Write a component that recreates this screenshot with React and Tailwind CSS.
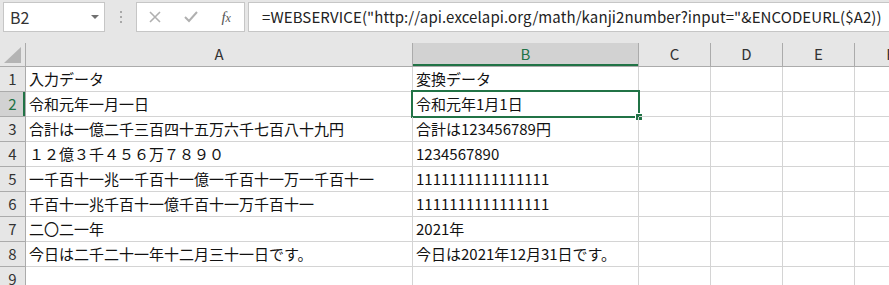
import React from "react";

const cols = [
  { k: "A", w: "w-[387px]" },
  { k: "B", w: "w-[226px]" },
  { k: "C", w: "w-[72px]" },
  { k: "D", w: "w-[72px]" },
  { k: "E", w: "w-[72px]" },
  { k: "F", w: "w-[72px]" },
];

const rows = [
  ["入力データ", "変換データ"],
  ["令和元年一月一日", "令和元年1月1日"],
  ["合計は一億二千三百四十五万六千七百八十九円", "合計は123456789円"],
  ["１２億３千４５６万７８９０", "1234567890"],
  ["一千百十一兆一千百十一億一千百十一万一千百十一", "1111111111111111"],
  ["千百十一兆千百十一億千百十一万千百十一", "1111111111111111"],
  ["二〇二一年", "2021年"],
  ["今日は二千二十一年十二月三十一日です。", "今日は2021年12月31日です。"],
  ["", ""],
];

export default function App() {
  return (
    <div className="w-[889px] h-[285px] overflow-hidden bg-[#e6e6e6] font-['Noto_Sans_CJK_JP','Noto_Sans',sans-serif] text-[15px] text-[#222]">
      {/* toolbar */}
      <div className="h-[43px] flex items-start pt-[2px]">
        <div className="ml-[3px] w-[102px] h-[30px] bg-white border border-[#c6c6c6] flex items-center justify-between pl-[6px] pr-[4px]">
          <span className="text-[16px] text-[#333] leading-none">B2</span>
          <svg width="10" height="6" viewBox="0 0 10 6">
            <path d="M1 1 L9 1 L5 5 Z" fill="#707070" />
          </svg>
        </div>
        <div className="w-[31px] h-[30px] flex flex-col items-center justify-center gap-[3px]">
          <span className="w-[2px] h-[2px] bg-[#a8a8a8]" />
          <span className="w-[2px] h-[2px] bg-[#a8a8a8]" />
          <span className="w-[2px] h-[2px] bg-[#a8a8a8]" />
        </div>
        <div className="w-[109px] h-[30px] bg-white border border-[#c6c6c6] flex items-center">
          <div className="w-[36px] flex justify-center">
            <svg width="12" height="12" viewBox="0 0 12 12">
              <path d="M1 1 L11 11 M11 1 L1 11" stroke="#b0b0b0" strokeWidth="1.6" />
            </svg>
          </div>
          <div className="w-[36px] flex justify-center">
            <svg width="14" height="12" viewBox="0 0 14 12">
              <path d="M1 6 L5 10 L13 1" stroke="#b0b0b0" strokeWidth="2" fill="none" />
            </svg>
          </div>
          <div className="w-[36px] flex justify-center">
            <span className="font-['Liberation_Serif',serif] italic text-[15px] text-[#555] leading-none">
              f<span className="text-[12px]">x</span>
            </span>
          </div>
        </div>
        <div className="ml-[3px] flex-1 h-[30px] bg-white border border-r-0 border-[#c6c6c6] flex items-center pl-[13px] whitespace-nowrap overflow-hidden">
          <span className="text-[15px] text-[#222] tracking-[0.1px]">
            =WEBSERVICE("http://api.excelapi.org/math/kanji2number?input="&amp;ENCODEURL($A2))
          </span>
        </div>
      </div>

      {/* sheet */}
      <div className="bg-white">
        {/* column header */}
        <div className="flex h-[24px] bg-[#e6e6e6] border-b border-[#ababab]">
          <div className="w-[26px] shrink-0 border-r border-[#ababab] flex items-end justify-end pr-[4px] pb-[3px]">
            <svg width="17" height="16" viewBox="0 0 17 16">
              <path d="M17 0 L17 16 L0 16 Z" fill="#b4b4b4" />
            </svg>
          </div>
          {cols.map((c) => (
            <div
              key={c.k}
              className={`${c.w} shrink-0 flex items-center justify-center border-r ${
                c.k === "B"
                  ? "bg-[#d2d2d2] text-[#217346] border-[#ababab] shadow-[inset_0_-2px_0_#217346]"
                  : "text-[#333] border-[#ababab]"
              }`}
            >
              {c.k}
            </div>
          ))}
        </div>
        {rows.map((r, i) => (
          <div key={i} className="flex h-[25px]">
            <div
              className={`w-[26px] shrink-0 border-b border-r flex items-center justify-center ${
                i === 1
                  ? "bg-[#d2d2d2] text-[#217346] border-[#ababab] shadow-[inset_-2px_0_0_#217346]"
                  : "bg-[#e6e6e6] text-[#333] border-[#ababab]"
              }`}
            >
              {i + 1}
            </div>
            {cols.map((c, j) => (
              <div
                key={c.k}
                className={`${c.w} shrink-0 border-b border-r border-[#d4d4d4] flex items-center pl-[3px] whitespace-nowrap text-[#111] relative`}
              >
                {j < 2 ? r[j] : ""}
                {i === 1 && j === 1 && (
                  <>
                    <div className="absolute left-[-2px] top-[-2px] right-[-2px] bottom-[-2px] border-2 border-[#217346] pointer-events-none" />
                    <div className="absolute right-[-5px] bottom-[-5px] w-[8px] h-[8px] bg-[#217346] border border-white" />
                  </>
                )}
              </div>
            ))}
          </div>
        ))}
      </div>
    </div>
  );
}
